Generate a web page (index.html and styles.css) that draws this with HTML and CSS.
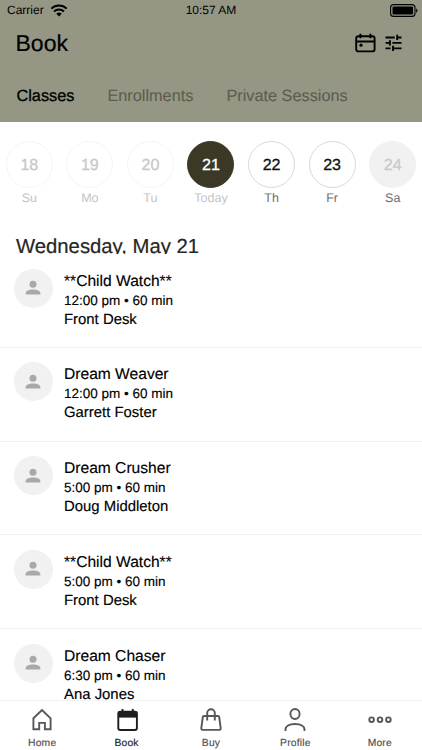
FILE: index.html
```html
<!DOCTYPE html>
<html lang="en">
<head>
    <meta charset="UTF-8">
    <meta name="viewport" content="width=device-width, initial-scale=1.0">
    <title>Book</title>
    <link rel="stylesheet" href="styles.css">
</head>
<body>
    <svg width="0" height="0" class="defs">
        <symbol id="person" viewBox="0 0 16 16">
            <circle cx="8" cy="4.3" r="3.5"/>
            <path d="M.6 14.6v-1.2c0-2.8 3.6-3.9 7.4-3.9s7.4 1.1 7.4 3.9v1.2z"/>
        </symbol>
    </svg>

    <div class="app">
        <header class="header">
            <div class="status-bar">
                <span class="carrier">Carrier
                    <svg width="18" height="13" viewBox="0 0 18 13">
                        <path d="M1.3 4.6a11 11 0 0 1 15.4 0M4 7.5a7.2 7.2 0 0 1 10 0" fill="none" stroke="#000" stroke-width="1.9"/>
                        <path d="M6.3 9.7a3.9 3.9 0 0 1 5.4 0L9 12.5z"/>
                    </svg>
                </span>
                <span class="time">10:57 AM</span>
                <svg class="battery" width="28" height="13" viewBox="0 0 28 13">
                    <rect x=".6" y=".6" width="24.4" height="11.8" rx="3" fill="none" stroke="#000" stroke-width="1.1"/>
                    <rect x="2.5" y="2.5" width="20.6" height="8" rx="1.3"/>
                    <path d="M26.2 4.4c1.7.5 1.7 3.7 0 4.2z"/>
                </svg>
            </div>
            <div class="title-bar">
                <h1>Book</h1>
                <div class="actions">
                    <svg width="21" height="20" viewBox="0 0 21 20" fill="none" stroke="#000" stroke-width="1.9">
                        <rect x="1.2" y="3.2" width="18.4" height="15.2" rx="2.2"/>
                        <path d="M1.2 8.5h18.4M5.4 .8v4.4M15.4 .8v4.4"/>
                        <circle cx="6" cy="12.2" r="1.6" fill="#000" stroke="none"/>
                    </svg>
                    <svg width="17" height="18" viewBox="0 0 17 18" fill="none" stroke="#000" stroke-width="1.9">
                        <path d="M.5 3.5h9.2M12.2 3.5h4.3M12.2 .8v5.2M.5 8.9h4.2M7.4 8.9h9.1M4.9 6.3v5.2M.5 14.4h5M8 14.4h8.5M8 11.7v5.3"/>
                    </svg>
                </div>
            </div>
            <nav class="tabs">
                <a class="tab active">Classes</a>
                <a class="tab">Enrollments</a>
                <a class="tab">Private Sessions</a>
            </nav>
        </header>

        <section class="week">
            <div class="day past"><span class="num">18</span><span class="name">Su</span></div>
            <div class="day past"><span class="num">19</span><span class="name">Mo</span></div>
            <div class="day past"><span class="num">20</span><span class="name">Tu</span></div>
            <div class="day today"><span class="num">21</span><span class="name">Today</span></div>
            <div class="day"><span class="num">22</span><span class="name">Th</span></div>
            <div class="day"><span class="num">23</span><span class="name">Fr</span></div>
            <div class="day closed"><span class="num">24</span><span class="name">Sa</span></div>
        </section>

        <h2 class="date">Wednesday, May 21</h2>

        <main class="list">
            <article class="item">
                <div class="avatar"><svg width="16" height="16"><use href="#person"/></svg></div>
                <div class="info">
                    <h3>**Child Watch**</h3>
                    <p class="when">12:00 pm • 60 min</p>
                    <p class="who">Front Desk</p>
                </div>
            </article>
            <article class="item">
                <div class="avatar"><svg width="16" height="16"><use href="#person"/></svg></div>
                <div class="info">
                    <h3>Dream Weaver</h3>
                    <p class="when">12:00 pm • 60 min</p>
                    <p class="who">Garrett Foster</p>
                </div>
            </article>
            <article class="item">
                <div class="avatar"><svg width="16" height="16"><use href="#person"/></svg></div>
                <div class="info">
                    <h3>Dream Crusher</h3>
                    <p class="when">5:00 pm • 60 min</p>
                    <p class="who">Doug Middleton</p>
                </div>
            </article>
            <article class="item">
                <div class="avatar"><svg width="16" height="16"><use href="#person"/></svg></div>
                <div class="info">
                    <h3>**Child Watch**</h3>
                    <p class="when">5:00 pm • 60 min</p>
                    <p class="who">Front Desk</p>
                </div>
            </article>
            <article class="item">
                <div class="avatar"><svg width="16" height="16"><use href="#person"/></svg></div>
                <div class="info">
                    <h3>Dream Chaser</h3>
                    <p class="when">6:30 pm • 60 min</p>
                    <p class="who">Ana Jones</p>
                </div>
            </article>
        </main>

        <nav class="bottom-nav">
            <a class="nav-item">
                <svg width="24" height="24" viewBox="0 0 24 24">
                    <path d="M3.4 10.3 12 2l8.6 8.3v11h-5.7v-6.4H9.2v6.4H3.4z"/>
                </svg>
                Home
            </a>
            <a class="nav-item active">
                <svg width="24" height="24" viewBox="0 0 24 24">
                    <rect x="3.3" y="3.6" width="18.6" height="18.4" rx="2"/>
                    <path d="M3 3.6h19.2v6H3z" fill="#1d1e22" stroke="none"/>
                    <path d="M7.5 1v3M17.8 1v3"/>
                </svg>
                Book
            </a>
            <a class="nav-item">
                <svg width="24" height="24" viewBox="0 0 24 24">
                    <path d="M5 8h14c.7 0 1.1.4 1.2 1l1.5 11c.1 1.1-.5 1.9-1.6 1.9H3.9c-1.1 0-1.7-.8-1.6-1.9L3.8 9c.1-.6.5-1 1.2-1zM8.2 12.5V5a3.8 3.8 0 0 1 7.6 0v7.5"/>
                </svg>
                Buy
            </a>
            <a class="nav-item">
                <svg width="24" height="24" viewBox="0 0 24 24">
                    <ellipse cx="12" cy="6" rx="4.6" ry="5"/>
                    <path d="M2.5 23v-1.5c0-3.2 3.6-5.5 9.5-5.5s9.5 2.3 9.5 5.5V23"/>
                </svg>
                Profile
            </a>
            <a class="nav-item">
                <svg width="24" height="24" viewBox="0 0 24 24">
                    <circle cx="3.6" cy="11.7" r="2.3"/>
                    <circle cx="12" cy="11.7" r="2.3"/>
                    <circle cx="20.4" cy="11.7" r="2.3"/>
                </svg>
                More
            </a>
        </nav>
    </div>
</body>
</html>
```

FILE: styles.css
```css
* {
    box-sizing: border-box;
}
body {
    margin: 0;
    font-family: "Liberation Sans", Arial, sans-serif;
    text-rendering: geometricPrecision;
    background: #fff;
    color: #000;
}
h1, h2, h3, p {
    margin: 0;
    font-weight: normal;
}
svg {
    display: block;
}
.defs {
    display: none;
}
.app {
    width: 422px;
    height: 750px;
    display: flex;
    flex-direction: column;
    overflow: hidden;
}
.header {
    height: 122px;
    flex: none;
    background: #959784;
}
.status-bar {
    height: 20px;
    display: grid;
    grid-template-columns: 1fr auto 1fr;
    align-items: center;
    padding: 0 4px 0 7px;
    font-size: 12px;
}
.carrier {
    display: flex;
    align-items: center;
    gap: 6px;
}
.time {
    margin-right: 3px;
}
.battery {
    justify-self: end;
}
.title-bar {
    height: 46px;
    display: flex;
    justify-content: space-between;
    align-items: center;
    padding: 0 20px 0 15.5px;
}
h1 {
    font-size: 23px;
    -webkit-text-stroke: 0.2px;
}
.actions {
    display: flex;
    align-items: center;
    gap: 9px;
}
.tabs {
    display: flex;
    gap: 33px;
    padding: 20px 0 0 16.5px;
}
.tab {
    font-size: 16.3px;
    line-height: 20px;
    color: #5c5d50;
    -webkit-text-stroke: 0.1px;
}
.tab.active {
    color: #000;
    -webkit-text-stroke: 0.3px;
}
.week {
    flex: none;
    display: grid;
    grid-template-columns: repeat(7, 1fr);
    height: 112px;
    margin: 0 -1px;
    padding-top: 19px;
}
.day {
    display: flex;
    flex-direction: column;
    align-items: center;
    color: #6e6e6e;
}
.num {
    width: 47px;
    height: 47px;
    border: 1px solid #d8d8d8;
    border-radius: 50%;
    line-height: 47px;
    text-align: center;
    font-size: 16px;
    color: #111;
    -webkit-text-stroke: 0.3px;
}
.name {
    margin-top: 2px;
    font-size: 12.5px;
    line-height: 17px;
}
.past, .today {
    color: #c4c4c4;
}
.past .num {
    border-color: #f5f5f5;
    color: #c8c8c8;
}
.today .num {
    background: #3b3926;
    border-color: #3b3926;
    color: #fff;
}
.closed .num {
    background: #f1f1f1;
    border-color: #f1f1f1;
    color: #cacaca;
}
/* the line box is shorter than the text, so descenders are cut off */
.date {
    flex: none;
    height: 20px;
    overflow: hidden;
    padding-left: 16px;
    font-size: 20.3px;
    line-height: 27px;
    color: #262626;
    -webkit-text-stroke: 0.2px;
}
.list {
    flex: 1;
    min-height: 0;
    overflow: hidden;
}
.item {
    height: 93.75px;
    display: flex;
    gap: 11.5px;
    padding: 14.5px 13.5px 0;
    border-bottom: 1px solid #f1f1f1;
}
.avatar {
    width: 39px;
    height: 39px;
    display: flex;
    justify-content: center;
    align-items: center;
    border-radius: 50%;
    background: #f1f1f1;
    fill: #a9a9a9;
}
.info {
    -webkit-text-stroke: 0.15px;
}
h3 {
    margin-top: 3px;
    font-size: 15.6px;
    line-height: 20px;
}
.when {
    font-size: 13.5px;
    line-height: 18px;
}
.who {
    font-size: 14.9px;
    line-height: 21px;
}
.bottom-nav {
    flex: none;
    height: 50px;
    display: grid;
    grid-template-columns: repeat(5, 1fr);
    border-top: 1px solid #f3f3f3;
    background: #fff;
}
.nav-item {
    display: flex;
    flex-direction: column;
    align-items: center;
    padding-top: 7px;
    gap: 5px;
    font-size: 10.3px;
    line-height: 13px;
    letter-spacing: 0.2px;
    color: #4d4d52;
    -webkit-text-stroke: 0.15px;
}
.nav-item svg {
    fill: none;
    stroke: #56575d;
    stroke-width: 1.9;
}
.nav-item.active {
    color: #1d1e22;
}
.nav-item.active svg {
    stroke: #1d1e22;
}
```
